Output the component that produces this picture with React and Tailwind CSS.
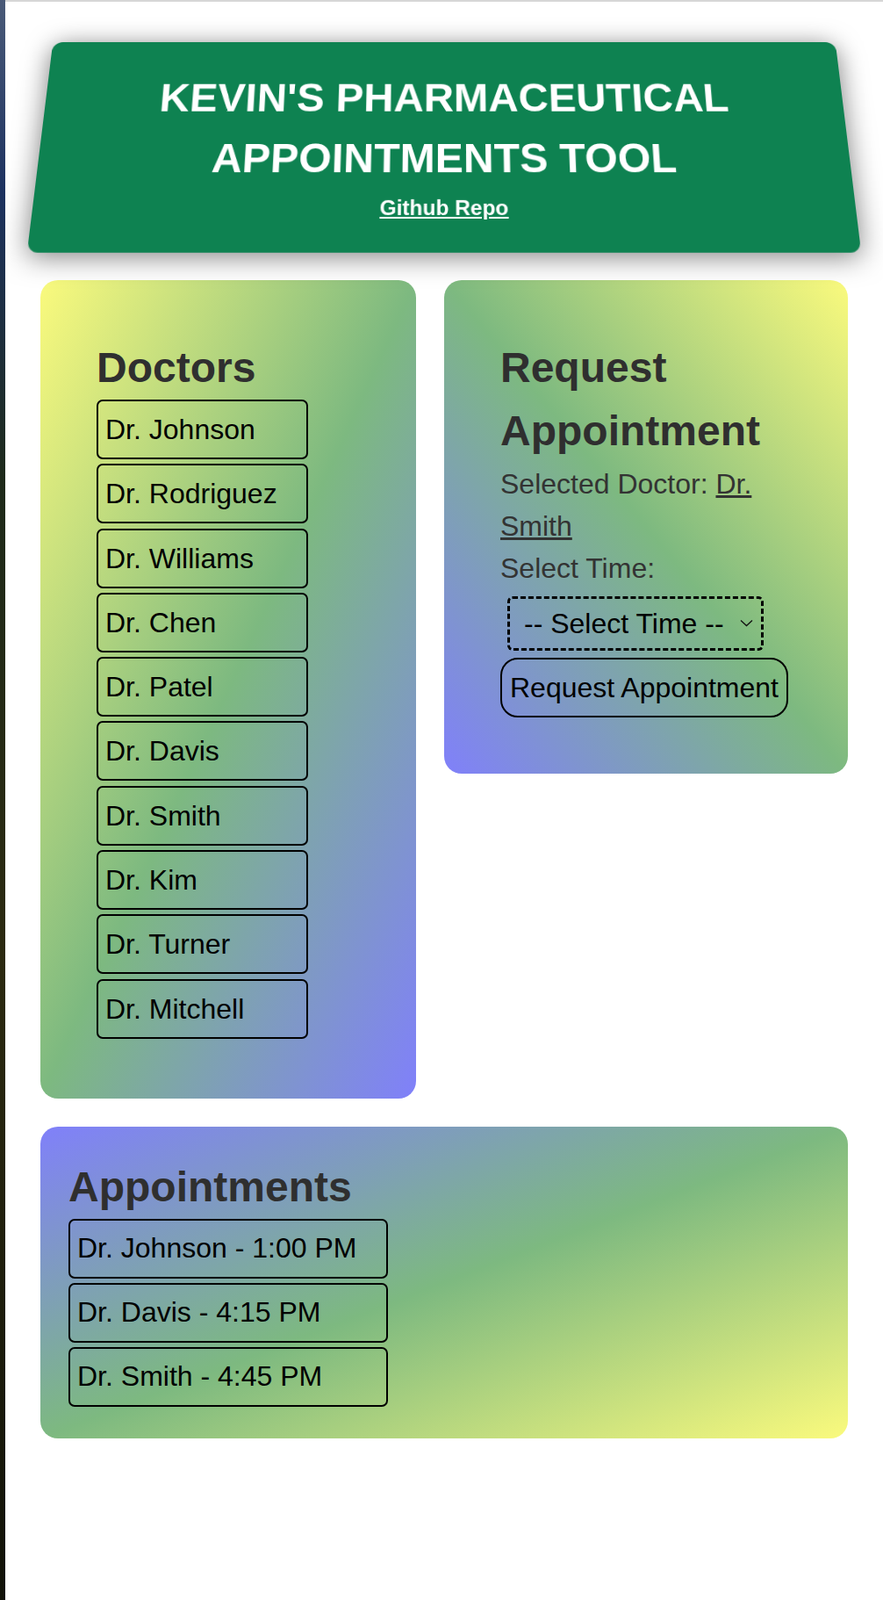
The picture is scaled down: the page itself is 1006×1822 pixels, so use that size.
import React, { useState } from "react";

const DOCTORS = [
  "Dr. Johnson",
  "Dr. Rodriguez",
  "Dr. Williams",
  "Dr. Chen",
  "Dr. Patel",
  "Dr. Davis",
  "Dr. Smith",
  "Dr. Kim",
  "Dr. Turner",
  "Dr. Mitchell",
];

const APPOINTMENTS = [
  { doctor: "Dr. Johnson", time: "1:00 PM" },
  { doctor: "Dr. Davis", time: "4:15 PM" },
  { doctor: "Dr. Smith", time: "4:45 PM" },
];

const TIMES = ["9:00 AM", "10:30 AM", "1:00 PM", "2:30 PM", "4:15 PM", "4:45 PM"];

function Header() {
  return (
    <header className="mx-[40px] mt-[38px] h-[248px] rounded-[12px] bg-[#0e8251] pt-[33px] text-center text-white shadow-[0_4px_30px_rgba(0,0,0,0.5)] [transform:perspective(1000px)_rotateX(15deg)]">
      <h1 className="text-[48px] font-bold leading-[72px]">
        KEVIN'S PHARMACEUTICAL
        <br />
        APPOINTMENTS TOOL
      </h1>
      <a href="#" className="block text-[24px] font-bold leading-[42px] underline">
        Github Repo
      </a>
    </header>
  );
}

function DoctorList({ onSelect }) {
  return (
    <section className="rounded-[20px] bg-[linear-gradient(to_bottom_right,#fafa7d,#7db980,#8080fa)] px-[64px] pt-[64px] pb-[68px]">
      <h2 className="text-[48px] font-bold leading-[72px] text-[#2f2f2f]">Doctors</h2>
      <div className="flex flex-col gap-[5.3px]">
        {DOCTORS.map((name) => (
          <button
            key={name}
            onClick={() => onSelect(name)}
            className="h-[68px] w-[241px] rounded-[7px] border-[2.5px] border-black px-2 text-left text-[32px] leading-[48px] text-black"
          >
            {name}
          </button>
        ))}
      </div>
    </section>
  );
}

function RequestForm({ doctor }) {
  const [time, setTime] = useState("");
  return (
    <section className="rounded-[20px] bg-[linear-gradient(to_bottom_left,#fafa7d,#7db980,#8080fa)] p-[64px]">
      <h2 className="text-[48px] font-bold leading-[72px] text-[#2f2f2f]">Request Appointment</h2>
      <p className="text-[32px] leading-[48px] text-[#333]">
        Selected Doctor: <span className="underline">{doctor}</span>
      </p>
      <p className="text-[32px] leading-[48px] text-[#333]">Select Time:</p>
      <div className="relative m-2 w-[292px]">
        <select
          value={time}
          onChange={(e) => setTime(e.target.value)}
          className="h-[62px] w-full appearance-none rounded-[6px] border-[3px] border-dashed border-black bg-transparent pl-[16px] text-[32px] text-black outline-none"
        >
          <option value="">-- Select Time --</option>
          {TIMES.map((t) => (
            <option key={t} value={t}>
              {t}
            </option>
          ))}
        </select>
        <svg
          className="pointer-events-none absolute right-[12px] top-[26px]"
          width="15"
          height="9"
          viewBox="0 0 15 9"
          fill="none"
        >
          <path d="M1 1.5l6.5 6L14 1.5" stroke="#111" strokeWidth="1.3" />
        </svg>
      </div>
      <button className="h-[68px] w-[328px] rounded-[20px] border-[2.5px] border-black px-2 text-[32px] leading-[48px] text-black">
        Request Appointment
      </button>
    </section>
  );
}

function AppointmentList() {
  return (
    <section className="col-span-2 rounded-[20px] bg-[linear-gradient(to_bottom_right,#8080fa,#7db980,#fafa7d)] px-[32px] pt-[33px] pb-[36px]">
      <h2 className="text-[48px] font-bold leading-[72px] text-[#2f2f2f]">Appointments</h2>
      <div className="flex flex-col gap-[5px]">
        {APPOINTMENTS.map((a) => (
          <div
            key={a.doctor}
            className="h-[68px] w-[364px] rounded-[7px] border-[2.5px] border-black px-2 py-2 text-[32px] leading-[47px] text-black"
          >
            {a.doctor} - {a.time}
          </div>
        ))}
      </div>
    </section>
  );
}

export default function App() {
  const [doctor, setDoctor] = useState("Dr. Smith");
  return (
    <div className="flex min-h-screen font-['Liberation_Sans',Arial,sans-serif]">
      <div className="w-[6px] shrink-0 bg-[linear-gradient(to_bottom,#4a5a78,#1d3260_12%,#1e2a1a_30%,#2c2a10_60%,#111208)]" />
      <main className="min-h-[1822px] flex-1 border-t-2 border-[#d6d6d6] bg-white">
        <Header />
        <div className="mx-[40px] mt-[31px] grid grid-cols-[428px_460px] items-start gap-8">
          <DoctorList onSelect={setDoctor} />
          <RequestForm doctor={doctor} />
          <AppointmentList />
        </div>
      </main>
    </div>
  );
}
